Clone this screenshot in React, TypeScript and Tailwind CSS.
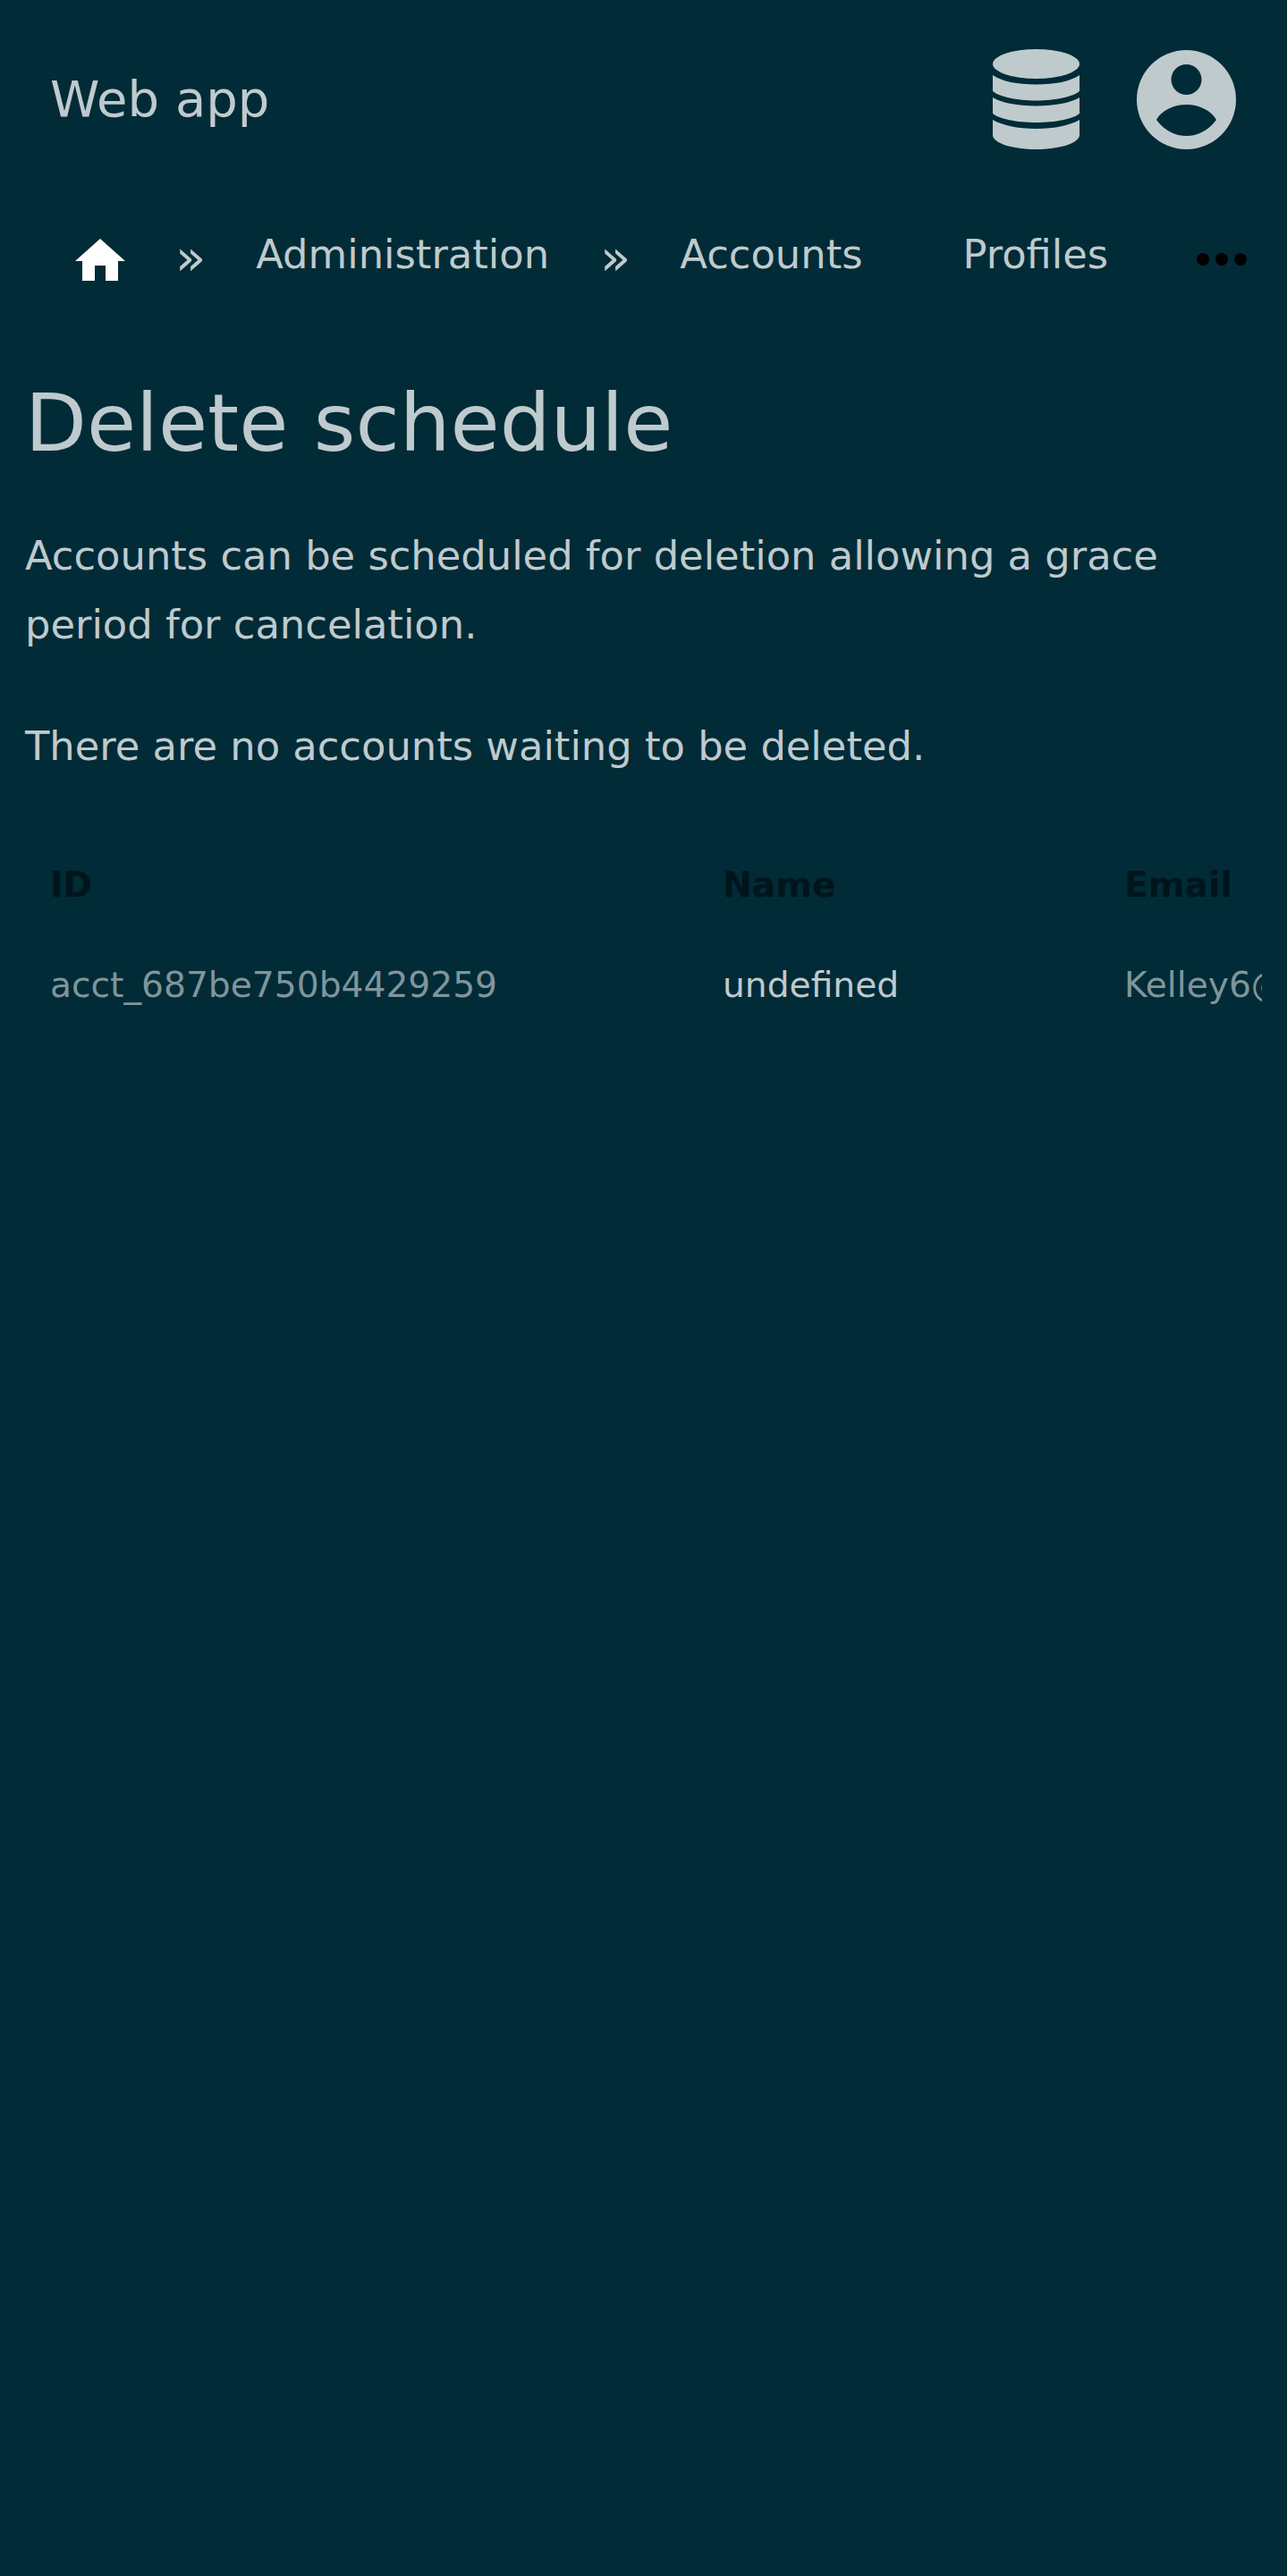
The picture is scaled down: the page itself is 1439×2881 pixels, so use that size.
const font = "font-['DejaVu_Sans',sans-serif]";

function HomeIcon() {
  return (
    <svg viewBox="0 0 56 47" className="w-[56px] h-[47px] fill-white mt-[11px]">
      <path d="M28 0 L56 25 L48 25 L48 47 L34 47 L34 30 L22 30 L22 47 L8 47 L8 25 L0 25 Z" />
    </svg>
  );
}

function DatabaseIcon() {
  return (
    <svg viewBox="0 0 97 112" className="w-[97px] h-[112px] fill-[#bfcacd]">
      <ellipse cx="48.5" cy="16.5" rx="48.5" ry="16.5" />
      <path d="M0 29 C10 36 28 39.5 48.5 39.5 C69 39.5 87 36 97 29 L97 47 C90 53 70 57.5 48.5 57.5 C27 57.5 7 53 0 47 Z" />
      <path d="M0 54 C10 60 28 63.5 48.5 63.5 C69 63.5 87 60 97 54 L97 72 C90 78 70 82 48.5 82 C27 82 7 78 0 72 Z" />
      <path d="M0 79 C10 85 28 89 48.5 89 C69 89 87 85 97 79 L97 96 C97 105 75 112 48.5 112 C22 112 0 105 0 96 Z" />
    </svg>
  );
}

function UserIcon() {
  return (
    <svg viewBox="0 0 111 111" className="w-[111px] h-[111px] fill-[#bfcacd]">
      <path
        fillRule="evenodd"
        d="M55.5 0 A55.5 55.5 0 1 1 55.5 111 A55.5 55.5 0 1 1 55.5 0 Z M55.5 16 A17 17 0 1 0 55.5 50 A17 17 0 1 0 55.5 16 Z M22 78 C28 67 42 61 55.5 61 C69 61 83 67 89 78 C80 90 68 96 55.5 96 C43 96 31 90 22 78 Z"
      />
    </svg>
  );
}

function Dots() {
  return (
    <div className="flex gap-[7px] mt-[10px]">
      <span className="w-[14px] h-[14px] rounded-full bg-black" />
      <span className="w-[14px] h-[14px] rounded-full bg-black" />
      <span className="w-[14px] h-[14px] rounded-full bg-black" />
    </div>
  );
}

export default function App() {
  return (
    <div className={`${font} min-h-[2881px] bg-[#012b37] text-[#bfcacd]`}>
      <header className="flex items-center justify-between h-[222px] pl-[56px] pr-[57px]">
        <div className="text-[56px]">Web app</div>
        <div className="flex items-center gap-[64px]">
          <DatabaseIcon />
          <UserIcon />
        </div>
      </header>

      <nav className="flex items-center h-[126px] pl-[84px] pr-[45px] text-[44.8px]">
        <HomeIcon />
        <span className="ml-[56px] text-[56px] mt-[6px]">»</span>
        <span className="ml-[56px]">Administration</span>
        <span className="ml-[57px] text-[56px] mt-[6px]">»</span>
        <span className="ml-[55px]">Accounts</span>
        <span className="ml-[112px]">Profiles</span>
        <div className="ml-auto">
          <Dots />
        </div>
      </nav>

      <main className="px-[28px]">
        <h1 className="text-[89.6px] leading-[110px] mt-[70px]">Delete schedule</h1>
        <p className="text-[44.8px] leading-[77px] mt-[55px]">
          Accounts can be scheduled for deletion allowing a grace
          <br />
          period for cancelation.
        </p>
        <p className="text-[44.8px] leading-[77px] mt-[59px]">There are no accounts waiting to be deleted.</p>

        <div className="overflow-hidden mt-[61px]">
          <table className="text-[39.2px] text-left whitespace-nowrap w-[1500px] table-fixed">
            <thead>
              <tr className="text-[#00151b]">
                <th className="w-[752px] pl-[28px] h-[112px] font-bold">ID</th>
                <th className="w-[449px] pl-[28px] font-bold">Name</th>
                <th className="pl-[28px] font-bold">Email</th>
              </tr>
            </thead>
            <tbody>
              <tr>
                <td className="pl-[28px] h-[112px] text-[#80959b]">acct_687be750b4429259</td>
                <td className="pl-[28px]">undefined</td>
                <td className="pl-[28px] text-[#80959b]">Kelley6@</td>
              </tr>
            </tbody>
          </table>
        </div>
      </main>
    </div>
  );
}
